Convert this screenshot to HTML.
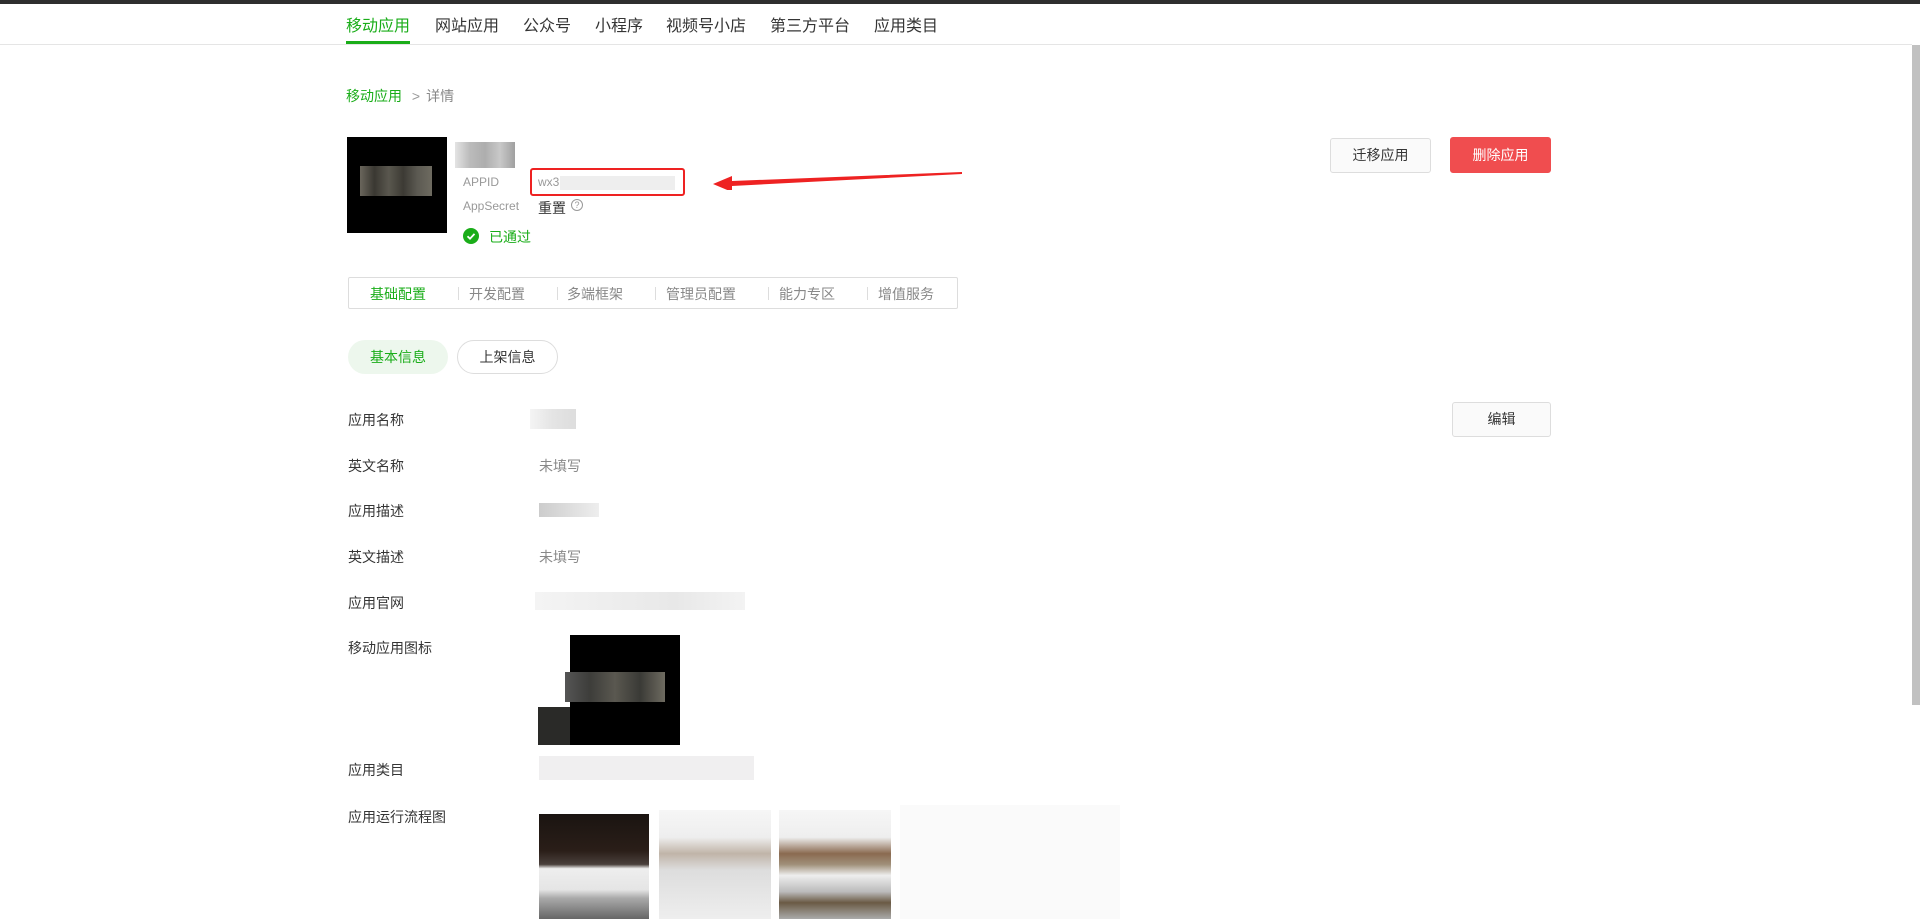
<!DOCTYPE html>
<html><head><meta charset="utf-8"><style>
*{margin:0;padding:0;box-sizing:border-box}
body{width:1920px;height:919px;overflow:hidden;background:#fff;font-family:"Liberation Sans","Noto Sans CJK SC",sans-serif;color:#353535;position:relative}
.a{position:absolute;white-space:nowrap}
.nav{font-size:16px;top:12px;color:#353535}
.lbl{font-size:14px;left:348px;color:#353535}
.val{font-size:14px;left:539px;color:#888}
.btn{position:absolute;border:1px solid #ddd;background:#fafafa;border-radius:3px;font-size:14px;text-align:center;color:#353535}
.blk{position:absolute}
</style></head><body>
<div class="blk" style="left:0;top:0;width:1920px;height:4px;background:#2e2e2e"></div>
<div class="blk" style="left:0;top:44px;width:1912px;height:1px;background:#e5e5e5"></div>
<div class="a nav" style="left:346px;color:#1aad19">移动应用</div>
<div class="blk" style="left:346px;top:41px;width:64px;height:3px;background:#1aad19"></div>
<div class="a nav" style="left:435px">网站应用</div>
<div class="a nav" style="left:523px">公众号</div>
<div class="a nav" style="left:595px">小程序</div>
<div class="a nav" style="left:666px">视频号小店</div>
<div class="a nav" style="left:770px">第三方平台</div>
<div class="a nav" style="left:874px">应用类目</div>
<div class="blk" style="left:1912px;top:45px;width:8px;height:660px;background:#c1c1c1"></div>

<div class="a" style="left:346px;top:86px;font-size:14px;color:#1aad19">移动应用 <span style="color:#999;margin:0 6px">&gt;</span><span style="color:#888">详情</span></div>

<div class="blk" style="left:347px;top:137px;width:100px;height:96px;background:#000"></div>
<div class="blk" style="left:360px;top:166px;width:72px;height:30px;background:linear-gradient(90deg,#6a665c,#3a3832,#5a574e,#3c3a34,#5c5a52,#6e6b60)"></div>
<div class="blk" style="left:455px;top:142px;width:60px;height:26px;background:linear-gradient(90deg,#ddd,#aaa,#999,#bbb,#888);opacity:.8"></div>
<div class="a" style="left:463px;top:175px;font-size:12px;color:#999">APPID</div>
<div class="a" style="left:463px;top:199px;font-size:12px;color:#999">AppSecret</div>
<div class="blk" style="left:530px;top:168px;width:155px;height:28px;border:2px solid #ee2222;border-radius:3px"></div>
<div class="a" style="left:538px;top:175px;font-size:12px;color:#999">wx3</div>
<div class="blk" style="left:560px;top:176px;width:115px;height:14px;background:#eee"></div>
<svg class="blk" style="left:710px;top:170px" width="255" height="20"><polygon points="3,14 22,6 22,11 252,2 252,4 22,16 22,22" fill="#ee2222"/></svg>
<div class="a" style="left:538px;top:198px;font-size:14px;color:#353535">重置</div>
<div class="blk" style="left:571px;top:199px;width:12px;height:12px;border:1px solid #999;border-radius:50%;font-size:9px;color:#999;text-align:center;line-height:10px">?</div>
<div class="blk" style="left:463px;top:228px;width:16px;height:16px;border-radius:50%;background:#1aad19"></div>
<svg class="blk" style="left:463px;top:228px" width="16" height="16"><path d="M4.5 8.2l2.5 2.5 4.5-4.8" stroke="#fff" stroke-width="1.8" fill="none"/></svg>
<div class="a" style="left:489px;top:227px;font-size:14px;color:#1aad19">已通过</div>

<div class="btn" style="left:1330px;top:138px;width:101px;height:35px;line-height:33px">迁移应用</div>
<div class="btn" style="left:1450px;top:137px;width:101px;height:36px;line-height:34px;background:#f04d4f;border-color:#f04d4f;color:#fff">删除应用</div>

<div class="blk" style="left:348px;top:277px;width:610px;height:32px;border:1px solid #ddd;border-radius:2px;font-size:14px;color:#888">
<span class="a" style="left:21px;top:6px;color:#1aad19">基础配置</span>
<span class="blk" style="left:109px;top:9px;width:1px;height:13px;background:#ddd"></span>
<span class="a" style="left:120px;top:6px">开发配置</span>
<span class="blk" style="left:208px;top:9px;width:1px;height:13px;background:#ddd"></span>
<span class="a" style="left:218px;top:6px">多端框架</span>
<span class="blk" style="left:306px;top:9px;width:1px;height:13px;background:#ddd"></span>
<span class="a" style="left:317px;top:6px">管理员配置</span>
<span class="blk" style="left:419px;top:9px;width:1px;height:13px;background:#ddd"></span>
<span class="a" style="left:430px;top:6px">能力专区</span>
<span class="blk" style="left:518px;top:9px;width:1px;height:13px;background:#ddd"></span>
<span class="a" style="left:529px;top:6px">增值服务</span>
</div>

<div class="btn" style="left:348px;top:340px;width:100px;height:34px;line-height:34px;border:none;border-radius:17px;background:#edf7ed;color:#1aad19">基本信息</div>
<div class="btn" style="left:457px;top:340px;width:101px;height:34px;line-height:32px;border-radius:17px;background:#fff">上架信息</div>

<div class="a lbl" style="top:410px">应用名称</div>
<div class="blk" style="left:530px;top:409px;width:46px;height:20px;background:linear-gradient(90deg,#f4f4f4,#e4e4e4,#ddd)"></div>
<div class="btn" style="left:1452px;top:402px;width:99px;height:35px;line-height:33px">编辑</div>
<div class="a lbl" style="top:456px">英文名称</div><div class="a val" style="top:456px">未填写</div>
<div class="a lbl" style="top:501px">应用描述</div>
<div class="blk" style="left:539px;top:503px;width:60px;height:14px;background:linear-gradient(90deg,#ccc,#ddd,#eee)"></div>
<div class="a lbl" style="top:547px">英文描述</div><div class="a val" style="top:547px">未填写</div>
<div class="a lbl" style="top:593px">应用官网</div>
<div class="blk" style="left:535px;top:592px;width:210px;height:18px;background:linear-gradient(90deg,#f4f4f4,#eee,#e8e8e8,#f3f3f3)"></div>
<div class="a lbl" style="top:638px">移动应用图标</div>
<div class="blk" style="left:570px;top:635px;width:110px;height:110px;background:#000"></div>
<div class="blk" style="left:565px;top:672px;width:100px;height:30px;background:linear-gradient(90deg,#555,#3d3d3a,#5a5850,#3a3a36,#6e6b60)"></div>
<div class="blk" style="left:538px;top:707px;width:32px;height:38px;background:#2a2a28"></div>
<div class="a lbl" style="top:760px">应用类目</div>
<div class="blk" style="left:539px;top:756px;width:215px;height:24px;background:#f0eff0"></div>
<div class="a lbl" style="top:807px">应用运行流程图</div>
<div class="blk" style="left:539px;top:814px;width:110px;height:105px;background:linear-gradient(180deg,#1a1411 0,#2a1e18 35%,#4a403c 48%,#eee 52%,#e5e5e5 72%,#aaa 80%,#666 100%)"></div>
<div class="blk" style="left:659px;top:810px;width:112px;height:109px;background:linear-gradient(180deg,#f6f6f6 0,#eee 25%,#c0b4a8 40%,#ddd 55%,#eee 100%)"></div>
<div class="blk" style="left:779px;top:810px;width:112px;height:109px;background:linear-gradient(180deg,#f6f6f6 0,#eee 25%,#8a6a50 40%,#a0907a 50%,#eee 60%,#bbb 75%,#6a5a44 85%,#aaa 100%)"></div>
<div class="blk" style="left:900px;top:805px;width:220px;height:114px;background:#fafafa"></div>
</body></html>
